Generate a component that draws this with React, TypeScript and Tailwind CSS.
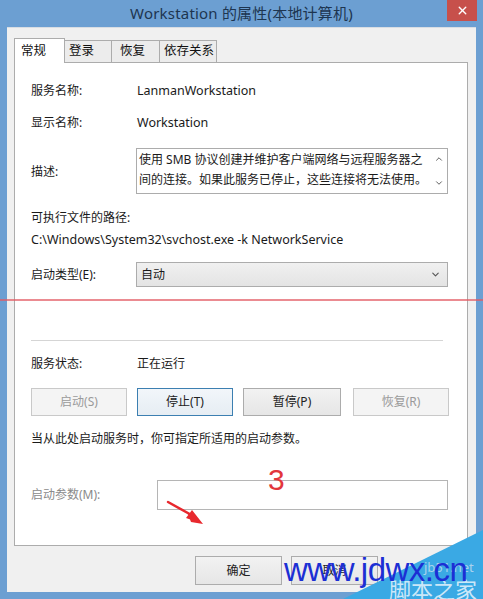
import { ChevronDown, ChevronUp, X } from 'lucide-react'

const font = { fontFamily: '"Noto Sans", "Noto Sans CJK SC", sans-serif' }

function Btn({ label, kind, w }: { label: string; kind: 'off' | 'on' | 'focus'; w: string }) {
  const cls =
    kind === 'off'
      ? 'border-[#c9c9c9] bg-[#f4f4f4] text-[#9a9a9a]'
      : kind === 'focus'
        ? 'border-[#3c7fb1] bg-gradient-to-b from-[#f2f6fa] to-[#e6edf3] text-[#222]'
        : 'border-[#acacac] bg-gradient-to-b from-[#f2f2f2] to-[#e6e6e6] text-[#222]'
  return (
    <div className={`${w} shrink-0 flex items-center justify-center border text-[12px] ${cls}`}>{label}</div>
  )
}

export default function App() {
  return (
    <div
      className="relative w-[483px] h-[599px] overflow-hidden bg-[#6c9fd2] flex flex-col"
      style={font}
    >
      {/* title bar */}
      <div className="h-[27px] shrink-0 flex items-center justify-center relative">
        <span className="text-[15px] text-[#1d3550] tracking-[0.2px]">Workstation 的属性(本地计算机)</span>
        <div className="absolute right-[6px] top-0 w-[30px] h-[21px] bg-[#c7504b] flex items-center justify-center">
          <X size={13} strokeWidth={2.6} color="#fff" />
        </div>
      </div>

      {/* client */}
      <div className="mx-[7px] h-[565px] bg-[#f0f0f0] pl-[7px] pt-[10px] border-t border-[#d8dde3]">
        {/* tabs */}
        <div className="flex items-end h-[24px] text-[12.5px] text-[#111] whitespace-nowrap">
          <div className="w-[51px] h-[25px] -mb-px bg-white border border-b-0 border-[#acacac] pl-[6px] pt-[3px] relative z-10">
            常规
          </div>
          <div className="w-[47px] h-[22px] bg-[#ececec] border border-l-0 border-b-0 border-[#acacac] pl-[4px] pt-[1px]">登录</div>
          <div className="w-[48px] h-[22px] bg-[#ececec] border border-l-0 border-b-0 border-[#acacac] pl-[8px] pt-[1px]">恢复</div>
          <div className="w-[57px] h-[22px] bg-[#ececec] border border-l-0 border-b-0 border-[#acacac] pl-[4px] pt-[1px]">依存关系</div>
        </div>

        {/* panel */}
        <div className="w-[454px] h-[484px] bg-white border border-[#acacac] pl-[16px] text-[12px] text-[#1a1a1a]">
          <div className="flex items-center h-[20px] mt-[18px]">
            <span className="w-[106px]">服务名称:</span>
            <span className="text-[12.5px]">LanmanWorkstation</span>
          </div>
          <div className="flex items-center h-[20px] mt-[12px]">
            <span className="w-[106px]">显示名称:</span>
            <span className="text-[12.5px]">Workstation</span>
          </div>
          <div className="flex items-center mt-[15px]">
            <span className="w-[105px] pt-[2px]">描述:</span>
            <div className="w-[312px] h-[46px] border border-[#acacac] flex">
              <div className="flex-1 pl-[2px] pt-[1px] leading-[20px]">
                使用 SMB 协议创建并维护客户端网络与远程服务器之间的连接。如果此服务已停止，这些连接将无法使用。
              </div>
              <div className="w-[17px] flex flex-col items-center justify-between py-[5px] text-[#606060]">
                <ChevronUp size={10} strokeWidth={2.4} />
                <ChevronDown size={10} strokeWidth={2.4} />
              </div>
            </div>
          </div>
          <div className="flex items-center h-[20px] mt-[14px]">可执行文件的路径:</div>
          <div className="flex items-center h-[20px] mt-[2px] text-[12.5px]">
            C:\Windows\System32\svchost.exe -k NetworkService
          </div>
          <div className="flex items-center mt-[12px]">
            <span className="w-[105px]">启动类型(E):</span>
            <div className="w-[312px] h-[25px] border border-[#acacac] bg-gradient-to-b from-[#f0f0f0] to-[#e4e4e4] flex items-center justify-between pl-[4px] pr-[6px]">
              <span>自动</span>
              <ChevronDown size={11} strokeWidth={2.4} color="#555" />
            </div>
          </div>

          <div className="w-[412px] h-px bg-[#d5d5d5] mt-[53px]" />

          <div className="flex items-center h-[20px] mt-[13px]">
            <span className="w-[106px]">服务状态:</span>
            <span>正在运行</span>
          </div>
          <div className="flex items-center mt-[14px] h-[28px]">
            <Btn label="启动(S)" kind="off" w="w-[96px] h-[28px]" />
            <div className="w-[10px] shrink-0" />
            <Btn label="停止(T)" kind="focus" w="w-[96px] h-[28px]" />
            <div className="w-[10px] shrink-0" />
            <Btn label="暂停(P)" kind="on" w="w-[98px] h-[28px]" />
            <div className="w-[12px] shrink-0" />
            <Btn label="恢复(R)" kind="off" w="w-[96px] h-[28px]" />
          </div>
          <div className="flex items-center h-[20px] mt-[13px]">当从此处启动服务时，你可指定所适用的启动参数。</div>
          <div className="flex items-center mt-[31px]">
            <span className="w-[126px] text-[#8a8a8a]">启动参数(M):</span>
            <div className="w-[291px] h-[30px] border border-[#b5b5b5] bg-white" />
          </div>
        </div>

        {/* dialog buttons */}
        <div className="flex gap-[9px] mt-[10px] pl-[181px]">
          <Btn label="确定" kind="on" w="w-[87px] h-[29px]" />
          <Btn label="取消" kind="on" w="w-[87px] h-[29px]" />
        </div>
      </div>

      {/* annotation line */}
      <div className="absolute left-0 top-[299px] w-full h-[2px] bg-[#e25a62]/70" />
      {/* annotation "3" and arrow */}
      <div
        className="absolute left-[268px] top-[465px] text-[30px] leading-none text-[#e2363c]"
        style={{ fontFamily: '"Liberation Sans", sans-serif' }}
      >
        3
      </div>
      <svg className="absolute left-[165px] top-[500px]" width="45" height="30" viewBox="0 0 45 30">
        <path d="M3 2 L30 17" stroke="#e8282e" strokeWidth="2.5" strokeLinecap="round" />
        <path d="M22 12 L38 24 L26 22 Z M27 10 L38 24 L21 18 Z" fill="#e8282e" />
      </svg>

      {/* watermark */}
      <svg className="absolute left-0 top-0" width="483" height="599" viewBox="0 0 483 599">
        <polygon points="343,599 483,530 483,599" fill="#3aa9e4" />
      </svg>
      <div className="absolute left-[424px] top-[561px] text-[13px] text-[#c9def0]/80 leading-none">jb51.net</div>
      <div
        className="absolute left-[389px] top-[577px] text-[22px] leading-none text-[#dff0fb]/90"
        style={{ fontFamily: '"Noto Sans CJK SC", sans-serif' }}
      >
        脚本之家
      </div>
      <div
        className="absolute left-[284px] top-[553px] text-[33px] leading-none text-[#1c2fd4] tracking-[-0.5px]"
        style={{ fontFamily: '"Liberation Sans", sans-serif' }}
      >
        www.jdwx.cn
      </div>
    </div>
  )
}
